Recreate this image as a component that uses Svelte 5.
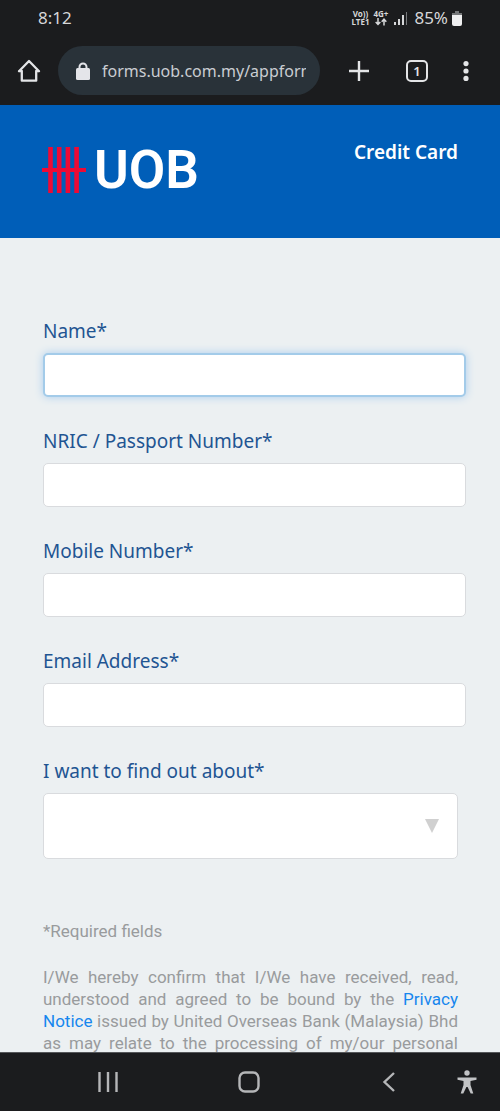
<script>
  const fields = [
    { id: 'name', label: 'Name*', type: 'text', active: true },
    { id: 'nric', label: 'NRIC / Passport Number*', type: 'text' },
    { id: 'mobile', label: 'Mobile Number*', type: 'tel' },
    { id: 'email', label: 'Email Address*', type: 'email' }
  ];
</script>

<div class="screen">
  <div class="status">
    <span class="time">8:12</span>
    <div class="signals">
      <div class="mini"><span>Vo))</span><span>LTE1</span></div>
      <div class="mini">
        <span>4G+</span>
        <svg width="12" height="8" viewBox="0 0 12 8" fill="none" stroke="#d6d7d9" stroke-width="1.5"><path d="M3 0v6M.7 4 3 6.5 5.3 4M9 7.5V1.5M6.7 3.8 9 1.2l2.3 2.6" /></svg>
      </div>
      <svg class="bars" width="14" height="14" viewBox="0 0 14 14"><path fill="#d6d7d9" d="M0 11h2v3H0zM4 8h2v6H4zM8 4h2v10H8z" /><path fill="#77797c" d="M12 1h1v13h-1z" /></svg>
      <span class="percent">85%</span>
      <svg width="10" height="15" viewBox="0 0 10 15"><path fill="#747678" d="M3 0h4v2h3v3H0V2h3z" /><path fill="#efeff0" d="M0 4h10v9a2 2 0 0 1-2 2H2a2 2 0 0 1-2-2z" /></svg>
    </div>
  </div>

  <div class="toolbar">
    <button class="home" aria-label="Home">
      <svg width="24" height="24" viewBox="0 0 24 24" fill="none" stroke="#e4e5e7" stroke-width="2.3" stroke-linejoin="round" stroke-linecap="round"><path d="M4.8 12v9.700h14.400V12M2 12.200h2.800M22 12.200h-2.800M2 12.200 12 2l10 10.200" /></svg>
    </button>
    <button class="address">
      <svg width="14" height="18" viewBox="0 0 14 18"><path fill="none" stroke="#e4e5e9" stroke-width="2" d="M3.500 8V5a3.500 3.500 0 0 1 7 0v3" /><rect y="6" width="14" height="12" rx="1.5" fill="#e4e5e9" /></svg>
      <span>forms.uob.com.my/appform</span>
    </button>
    <button class="add" aria-label="New tab">
      <svg width="20" height="20" viewBox="0 0 20 20" stroke="#e4e5e7" stroke-width="2.4"><path d="M10 0v20M0 10h20" /></svg>
    </button>
    <button class="tabs" aria-label="Open tabs">1</button>
    <button class="more" aria-label="More options">
      <svg width="6" height="20" viewBox="0 0 6 20" fill="#e4e5e7"><circle cx="3" cy="2.6" r="2.6" /><circle cx="3" cy="10" r="2.6" /><circle cx="3" cy="17.4" r="2.6" /></svg>
    </button>
  </div>

  <div class="page">
    <header>
      <div class="brand">
        <svg width="44" height="46" viewBox="0 0 44 46" fill="none" stroke="#ee0a35" stroke-width="4.6"><path d="M8.500 0v46M17.200 0v46M25.900 0v46M34.600 0v46" /><path stroke-width="4" d="M0 23h44" /></svg>
        <span>UOB</span>
      </div>
      <span class="product">Credit Card</span>
    </header>

    <form>
      {#each fields as field}
        <div class="field">
          <label for={field.id}>{field.label}</label>
          <input id={field.id} type={field.type} class:active={field.active} />
        </div>
      {/each}
      <div class="field">
        <label for="topic">I want to find out about*</label>
        <div class="select">
          <select id="topic"><option value=""></option></select>
          <svg width="14" height="14" viewBox="0 0 14 14"><path fill="#d0d0d0" d="M0 0h14L7 14z" /></svg>
        </div>
      </div>
      <p class="required">*Required fields</p>
      <p class="consent">I/We hereby confirm that I/We have received, read, understood and agreed to be bound by the <a href="#privacy">Privacy Notice</a> issued by United Overseas Bank (Malaysia) Bhd as may relate to the processing of my/our personal</p>
    </form>
  </div>

  <nav>
    <div class="keys">
      <button aria-label="Recent apps">
        <svg width="20" height="20" viewBox="0 0 20 20" stroke="#b5b6b8" stroke-width="2.4"><path d="M1.500 0v20M10 0v20M18.500 0v20" /></svg>
      </button>
      <button aria-label="Home screen">
        <svg width="22" height="22" viewBox="0 0 22 22" fill="none" stroke="#b5b6b8" stroke-width="2.4"><rect x="1.5" y="1.5" width="19" height="19" rx="5.5" /></svg>
      </button>
      <button aria-label="Back">
        <svg width="20" height="20" viewBox="0 0 20 20" fill="none" stroke="#b5b6b8" stroke-width="2.4"><path d="M15 1 5.500 10l9.500 9" /></svg>
      </button>
    </div>
    <button aria-label="Accessibility">
      <svg width="20" height="24" viewBox="0 0 20 24" fill="#c2c3c5"><circle cx="10" cy="3" r="2.7" /><path d="M.5 7.500h19v2.300l-6 1.200v4l2.800 8.500h-2.600L10.600 17H9.400l-3.100 6.500H3.700L6.500 15v-4l-6-1.200z" /></svg>
    </button>
  </nav>
</div>

<style>
  :global(body) {
    margin: 0;
    background: #1b1c1e;
  }
  .screen {
    height: 100vh;
    display: flex;
    flex-direction: column;
    overflow: hidden;
    font-family: "Noto Sans", sans-serif;
    background: #1b1c1e;
  }
  button {
    display: flex;
    align-items: center;
    justify-content: center;
    padding: 0;
    border: 0;
    background: none;
    color: #e4e5e7;
    font-family: inherit;
  }
  svg {
    display: block;
    flex: none;
  }
  .status {
    flex: none;
    box-sizing: border-box;
    height: 36px;
    padding: 0 38px;
    display: flex;
    align-items: center;
    justify-content: space-between;
    color: #d6d7d9;
    font-size: 17px;
    line-height: 36px;
  }
  .signals {
    display: flex;
    align-items: center;
    gap: 4px;
  }
  .mini {
    display: flex;
    flex-direction: column;
    align-items: center;
    font-size: 8px;
    font-weight: 700;
    line-height: 8px;
  }
  .bars,
  .percent {
    margin-left: 2px;
  }
  .toolbar {
    flex: none;
    box-sizing: border-box;
    height: 69px;
    padding: 0 31px 0 17px;
    display: flex;
    align-items: center;
  }
  .address {
    flex: 1;
    min-width: 0;
    height: 49px;
    margin: 0 29px 0 17px;
    padding: 0 14px 0 18px;
    gap: 12px;
    border-radius: 25px;
    background: #293239;
    color: #c9cdd2;
    font-size: 16px;
    justify-content: flex-start;
  }
  .address span {
    overflow: hidden;
    white-space: nowrap;
  }
  .tabs {
    box-sizing: border-box;
    width: 22px;
    height: 22px;
    margin: 0 35px 0 37px;
    border: 2px solid #e4e5e7;
    border-radius: 5px;
    font-size: 13px;
    font-weight: 600;
    line-height: 18px;
  }
  .page {
    flex: 1;
    min-height: 0;
    overflow: hidden;
    background: #ecf0f2;
  }
  header {
    box-sizing: border-box;
    height: 133px;
    padding: 33px 42px 0;
    display: flex;
    align-items: flex-start;
    justify-content: space-between;
    background: #005eb8;
    color: #fff;
  }
  .brand {
    display: flex;
    align-items: center;
    gap: 8px;
    padding-top: 7px;
    font-family: Roboto, sans-serif;
    font-size: 53px;
    font-weight: 600;
    line-height: 50px;
  }
  .product {
    font-size: 19px;
    font-weight: 600;
    line-height: 28px;
  }
  form {
    padding: 79px 42px 0 43px;
  }
  .field {
    margin-bottom: 30px;
  }
  label {
    display: block;
    margin-bottom: 8px;
    color: #1f5592;
    font-size: 19px;
    line-height: 28px;
  }
  input {
    display: block;
    box-sizing: border-box;
    width: calc(100% + 8px);
    height: 44px;
    padding: 0 12px;
    border: 1px solid #d9dbde;
    border-radius: 5px;
    background: #fff;
    font: inherit;
    outline: none;
  }
  input.active {
    border: 2px solid #a3cbe9;
    box-shadow: 0 0 8px #a9cdee;
  }
  .select {
    display: grid;
    align-items: center;
  }
  .select > * {
    grid-area: 1 / 1;
  }
  .select svg {
    justify-self: end;
    margin-right: 19px;
    pointer-events: none;
  }
  select {
    box-sizing: border-box;
    width: 100%;
    height: 66px;
    padding: 0 44px 0 12px;
    appearance: none;
    border: 1px solid #d9dbde;
    border-radius: 5px;
    background: #fff;
    font: inherit;
  }
  p {
    margin: 0;
    color: #999b9d;
    font-family: Roboto, sans-serif;
    font-size: 17px;
    line-height: 22px;
  }
  .required {
    padding-top: 31px;
  }
  .consent {
    padding-top: 24px;
    text-align: justify;
    text-align-last: justify;
  }
  a {
    color: #1686ee;
    text-decoration: none;
  }
  nav {
    flex: none;
    box-sizing: border-box;
    height: 59px;
    padding: 0 23px 0 98px;
    display: flex;
    align-items: center;
    gap: 58px;
    border-top: 1px solid #55575a;
    background: #1b1c1e;
  }
  .keys {
    flex: 1;
    display: flex;
    align-items: center;
    justify-content: space-between;
  }
</style>
